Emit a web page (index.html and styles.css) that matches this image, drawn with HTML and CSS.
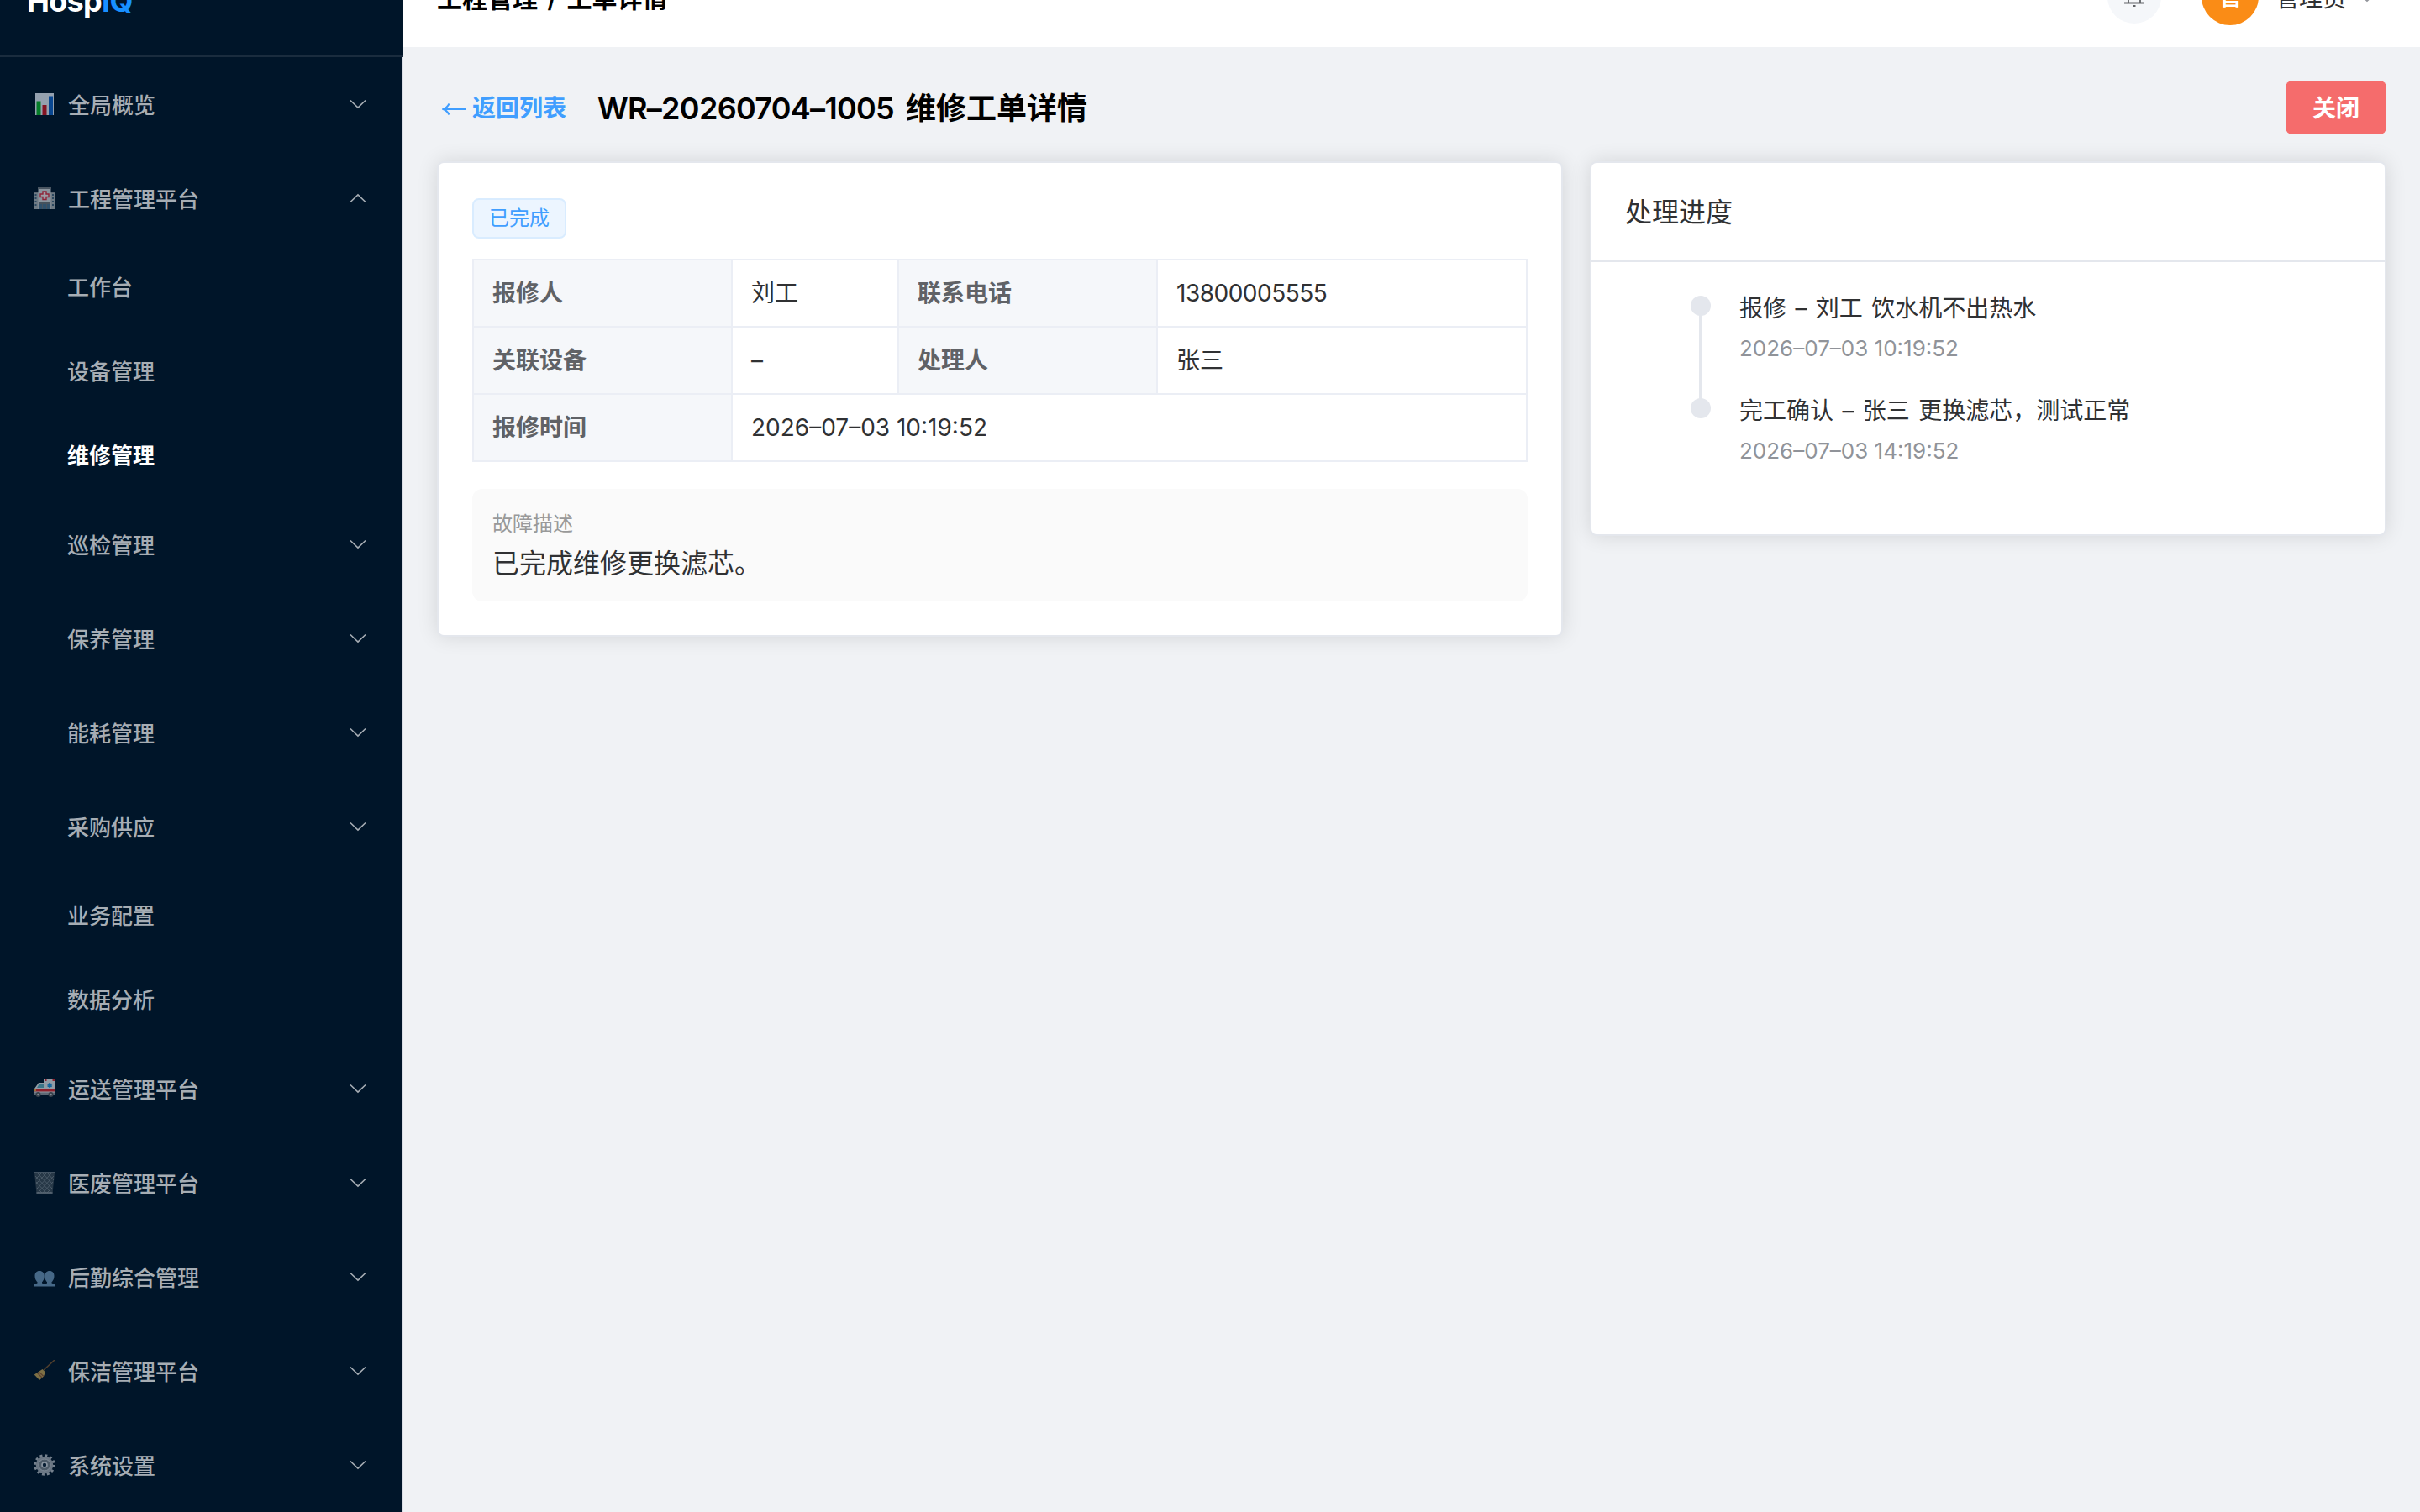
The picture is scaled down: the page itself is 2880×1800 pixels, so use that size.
FILE: index.html
```
<!DOCTYPE html>
<html lang="zh-CN">
<head>
    <meta charset="utf-8" />
    <title>HospIQ - 工单详情</title>
    <link rel="stylesheet" href="styles.css">
</head>
<body>
<svg class="defs">
    <symbol id="arrow" viewBox="0 0 24 24"><path d="M3 7.5l9 8.6 9-8.6" fill="none" stroke="currentColor" stroke-width="1.6"/></symbol>
</svg>
<div class="app">
    <aside class="sidebar">
        <div class="logo">Hosp<span>IQ</span></div>
        <ul class="menu">
            <li class="group">
                <svg class="emoji" viewBox="0 0 26 26">
                    <rect x="2" y="0" width="22" height="26" fill="#e3edf7"/>
                    <rect x="3.5" y="9.500" width="5" height="16.500" fill="#08b52a"/>
                    <rect x="10.500" y="14" width="5" height="12" fill="#c9131f"/>
                    <rect x="18" y="3.500" width="5" height="22.500" fill="#0f63c9"/>
                </svg>
                <span>全局概览</span><svg class="arrow"><use href="#arrow"/></svg>
            </li>
            <li class="group">
                <svg class="emoji" viewBox="0 0 26 26">
                    <path d="M0 5h26v21H0z" fill="#a9b0b6"/>
                    <path d="M0 5h6v1.500H0zM20 5h6v1.500h-6zM5 0h16v2H5z" fill="#717880"/>
                    <path d="M5.500 2h15v24h-15z" fill="#d5d8dc"/>
                    <path d="M1.500 8h2v2h-2zM1.500 12h2v2h-2zM1.500 16h2v2h-2zM1.500 20h2v2h-2zM22 8h2v2h-2zM22 12h2v2h-2zM22 16h2v2h-2zM22 20h2v2h-2z" fill="#41627c"/>
                    <path d="M7 18h12v8H7z" fill="#4b7190"/>
                    <path d="M7 18h12v2H7zM10 20h1v6h-1zM15 20h1v6h-1z" fill="#6c737a"/>
                    <path d="M11 5h4v3h3v3.500h-3v3h-4v-3H8V8h3z" fill="#f2e8ea" stroke="#dc2b3f" stroke-width="1.4"/>
                </svg>
                <span>工程管理平台</span><svg class="arrow up"><use href="#arrow"/></svg>
            </li>
            <li class="item">工作台</li>
            <li class="item">设备管理</li>
            <li class="item active">维修管理</li>
            <li class="group sub"><span>巡检管理</span><svg class="arrow"><use href="#arrow"/></svg></li>
            <li class="group sub"><span>保养管理</span><svg class="arrow"><use href="#arrow"/></svg></li>
            <li class="group sub"><span>能耗管理</span><svg class="arrow"><use href="#arrow"/></svg></li>
            <li class="group sub"><span>采购供应</span><svg class="arrow"><use href="#arrow"/></svg></li>
            <li class="item">业务配置</li>
            <li class="item">数据分析</li>
            <li class="group">
                <svg class="emoji" viewBox="0 0 26 26">
                    <path d="M12 2h14v18H1v-7l5-7h6z" fill="#dfe3e8"/>
                    <path d="M7 7h5v5H4z" fill="#5ba9bd"/>
                    <path d="M0 13.500h26v3H0z" fill="#d9262e"/>
                    <path d="M0 13h3v3H0z" fill="#f2a13a"/>
                    <path d="M13 2h2.500v2H13zM22.500 2H25v2h-2.500z" fill="#d9262e"/>
                    <path d="M19.200 6v6M16.600 7.500l5.200 3M21.800 7.500l-5.200 3" stroke="#1d91dd" stroke-width="2"/>
                    <path d="M0 17.500h26V20H0z" fill="#8f959c"/>
                    <circle cx="5.500" cy="20" r="3" fill="#55595f"/><circle cx="20.500" cy="20" r="3" fill="#55595f"/>
                    <circle cx="5.500" cy="20" r="1.300" fill="#c8ccd1"/><circle cx="20.500" cy="20" r="1.300" fill="#c8ccd1"/>
                </svg>
                <span>运送管理平台</span><svg class="arrow"><use href="#arrow"/></svg>
            </li>
            <li class="group">
                <svg class="emoji" viewBox="0 0 26 26">
                    <path d="M1 1h24l-2.500 25h-19z" fill="#3d4b58"/>
                    <path d="M2 5l19 20M5 2l18 19M11 2l12 13M17 2l7 8M3 12l12 13M4 19l6 6M24 5L5 25M21 2L3 21M15 2L3 14M9 2L2 9M23 12L11 25M22 19l-6 6" stroke="#7f8b96" stroke-width=".8"/>
                    <path d="M0 1h26M3.500 25h19" stroke="#8b959f" stroke-width="1.600"/>
                </svg>
                <span>医废管理平台</span><svg class="arrow"><use href="#arrow"/></svg>
            </li>
            <li class="group">
                <svg class="emoji" viewBox="0 0 26 26">
                    <path d="M7 6c-3.500 0-5.500 2.400-5.500 6 0 3 1 5.500 3 7.200v1.300L1 22v2.500h12V22l-3-1.500v-1.300c2-1.700 2.800-4.200 2.800-7.200 0-3.600-2.300-6-5.800-6z" fill="#6c95ba"/>
                    <path d="M19 6c3.500 0 5.500 2.400 5.500 6 0 3-1 5.500-3 7.200v1.300L25 22v2.500H13.500V22l2.500-1.500v-1.300c-2-1.700-2.600-4.200-2.600-7.200 0-3.600 2.100-6 5.600-6z" fill="#6c95ba"/>
                </svg>
                <span>后勤综合管理</span><svg class="arrow"><use href="#arrow"/></svg>
            </li>
            <li class="group">
                <svg class="emoji" viewBox="0 0 26 26">
                    <path d="M25 0L12 12" stroke="#7a5430" stroke-width="1.600"/>
                    <path d="M10.500 11l3.500 3.500-2 5L7 24 .8 17.500 6 14z" fill="#c0a255"/>
                    <path d="M6 14l6 5.500M4.500 15.500l5.500 5.500" stroke="#8f5a35" stroke-width="1.300"/>
                </svg>
                <span>保洁管理平台</span><svg class="arrow"><use href="#arrow"/></svg>
            </li>
            <li class="group">
                <svg class="emoji" viewBox="0 0 26 26">
                    <circle cx="13" cy="13" r="11.300" fill="none" stroke="#b4bcc4" stroke-width="3" stroke-dasharray="2.960 2.960"/>
                    <circle cx="13" cy="13" r="10.300" fill="#a3abb4"/>
                    <circle cx="13" cy="13" r="7" fill="#77818b" stroke="#c3cad1" stroke-width="1"/>
                    <circle cx="13" cy="13" r="3" fill="#0d2338" stroke="#d5dbe1" stroke-width="1.600"/>
                </svg>
                <span>系统设置</span><svg class="arrow"><use href="#arrow"/></svg>
            </li>
        </ul>
    </aside>

    <div class="main">
        <header class="topbar">
            <div class="crumb">工程管理 / 工单详情</div>
            <div class="bell">
                <svg viewBox="0 0 28 28"><path d="M7 21V12a7 7 0 0 1 14 0v9M2 21.500h24M14 2v3M12.500 25h3" fill="none" stroke="#606266" stroke-width="1.800"/></svg>
            </div>
            <div class="avatar">管</div>
            <div class="user">管理员</div>
            <svg class="user-arrow"><use href="#arrow"/></svg>
        </header>

        <div class="page-head">
            <a class="back"><svg viewBox="0 0 28 16"><path d="M28 8H2M8.500 1.500Q6 6.500 1.500 8q4.500 1.500 7 6.500" fill="none" stroke="currentColor" stroke-width="2"/></svg>返回列表</a>
            <h2><span class="no">WR–20260704–1005</span> 维修工单详情</h2>
            <button class="btn-close">关闭</button>
        </div>

        <div class="row">
            <section class="card detail">
                <span class="tag">已完成</span>
                <table class="desc">
                    <colgroup><col class="c-label"><col class="c-short"><col class="c-label"><col></colgroup>
                    <tr><th>报修人</th><td>刘工</td><th>联系电话</th><td class="phone">13800005555</td></tr>
                    <tr><th>关联设备</th><td>–</td><th>处理人</th><td>张三</td></tr>
                    <tr><th>报修时间</th><td colspan="3">2026–07–03 10:19:52</td></tr>
                </table>
                <div class="fault">
                    <div class="fault-label">故障描述</div>
                    <div class="fault-text">已完成维修更换滤芯。</div>
                </div>
            </section>

            <section class="card progress">
                <div class="card-head">处理进度</div>
                <ul class="timeline">
                    <li>
                        <div class="event">报修 – 刘工 饮水机不出热水</div>
                        <div class="time">2026–07–03 10:19:52</div>
                    </li>
                    <li>
                        <div class="event">完工确认 – 张三 更换滤芯，测试正常</div>
                        <div class="time">2026–07–03 14:19:52</div>
                    </li>
                </ul>
            </section>
        </div>
    </div>
</div>
</body>
</html>
```
FILE: styles.css
```
* {
    box-sizing: border-box;
}
body {
    margin: 0;
    height: 1800px;
    overflow: hidden;
    background: #f0f2f5;
    color: #303133;
    font-family: Inter, "Noto Sans CJK SC", sans-serif;
    font-size: 28px;
}
ul {
    list-style: none;
    margin: 0;
    padding: 0;
}
.defs {
    display: none;
}
/* page is scrolled down by 64px */
.app {
    display: flex;
    margin-top: -64px;
    height: 1864px;
}

/* sidebar */
.sidebar {
    width: 480px;
    flex: none;
}
.logo {
    height: 132px;
    padding: 0 0 2px 32px;
    background: #001529;
    border-bottom: 2px solid #1a2c3e;
    color: #fff;
    font-size: 36px;
    font-weight: 700;
    line-height: 130px;
    letter-spacing: -.7px;
}
.logo span {
    color: #1890ff;
}
.menu {
    background: #001529;
    border-right: 2px solid #dcdfe6;
    color: #a6adb4;
    font-size: 26px;
    font-weight: 500;
}
.group {
    display: flex;
    align-items: center;
    height: 112px;
    padding: 0 40px;
}
.group span {
    padding-bottom: 2px;
}
.group.sub {
    padding-left: 80px;
}
.item {
    height: 100px;
    padding-left: 80px;
    line-height: 102px;
}
.item.active {
    color: #fff;
    font-weight: 600;
}
.emoji {
    width: 26px;
    height: 26px;
    margin-right: 15px;
    opacity: .65;
}
.arrow {
    width: 24px;
    height: 24px;
    margin-left: auto;
}
.arrow.up {
    transform: scaleY(-1);
}

/* top bar */
.main {
    flex: 1;
}
.topbar {
    display: flex;
    align-items: center;
    height: 120px;
    padding: 0 53px 0 40px;
    background: #fff;
}
.crumb {
    color: #000;
    font-size: 30px;
    font-weight: 600;
    margin-right: auto;
    word-spacing: 4px;
}
.bell {
    display: flex;
    align-items: center;
    justify-content: center;
    width: 64px;
    height: 64px;
    border-radius: 50%;
    background: #f5f7fa;
}
.bell svg {
    width: 28px;
    height: 28px;
}
.avatar {
    width: 68px;
    height: 68px;
    margin: 0 20px 0 48px;
    border-radius: 50%;
    background: #fa8c16;
    color: #fff;
    font-weight: 600;
    line-height: 68px;
    text-align: center;
}
.user-arrow {
    width: 20px;
    height: 20px;
    margin: 4px 0 0 15px;
    color: #909399;
}

/* page title row */
.page-head {
    display: flex;
    align-items: center;
    height: 64px;
    margin: 40px 40px 32px;
}
.back {
    display: flex;
    align-items: center;
    padding-bottom: 2px;
    color: #409eff;
    font-weight: 600;
}
.back svg {
    width: 28px;
    height: 16px;
    margin: 6px 8px 0 6px;
}
h2 {
    margin: 0 auto 0 37px;
    padding-bottom: 4px;
    color: #000;
    font-size: 36px;
    font-weight: 600;
}
.no {
    margin-right: 5px;
    letter-spacing: -.7px;
}
.btn-close {
    width: 120px;
    height: 64px;
    padding: 0 0 2px;
    border: 0;
    border-radius: 8px;
    background: #f56c6c;
    color: #fff;
    font: inherit;
    font-weight: 600;
}

/* cards */
.row {
    display: grid;
    grid-template-columns: 1340px 948px;
    gap: 32px;
    align-items: start;
    padding: 0 40px;
}
.card {
    background: #fff;
    border: 2px solid #e4e7ed;
    border-radius: 8px;
    box-shadow: 0 0 24px rgba(0, 0, 0, .12);
}
.detail {
    height: 566px;
    padding: 40px;
}
.tag {
    display: block;
    width: 112px;
    height: 48px;
    margin: 2px 0 24px;
    border: 2px solid #d9ecff;
    border-radius: 8px;
    background: #ecf5ff;
    color: #409eff;
    font-size: 24px;
    line-height: 43px;
    text-align: center;
}
.desc {
    width: 1256px;
    table-layout: fixed;
    border-collapse: collapse;
}
.c-label {
    width: 308px;
}
.c-short {
    width: 198px;
}
.desc th, .desc td {
    height: 80px;
    padding: 0 22px;
    border: 2px solid #ebeef5;
    text-align: left;
    line-height: 46px;
}
.desc th {
    background: #f5f7fa;
    color: #606266;
    font-weight: 700;
}
.phone {
    letter-spacing: -.5px;
}
.fault {
    height: 134px;
    margin-top: 32px;
    padding: 25px 24px;
    border-radius: 12px;
    background: #fafafa;
}
.fault-label {
    color: #999;
    font-size: 24px;
    line-height: 34px;
}
.fault-text {
    margin-top: 7px;
    font-size: 32px;
    line-height: 46px;
}

.progress {
    height: 446px;
}
.card-head {
    height: 118px;
    padding: 1px 0 0 40px;
    border-bottom: 2px solid #e4e7ed;
    font-size: 32px;
    line-height: 116px;
}
.timeline {
    padding: 40px 40px 0 118px;
}
.timeline li {
    position: relative;
    height: 122px;
    padding: 1px 0 0 58px;
}
.timeline li::before {
    content: "";
    position: absolute;
    left: 0;
    top: 0;
    width: 24px;
    height: 24px;
    border-radius: 50%;
    background: #e4e7ed;
}
.timeline li:first-child::after {
    content: "";
    position: absolute;
    left: 10px;
    top: 12px;
    width: 4px;
    height: 122px;
    background: #e4e7ed;
}
.event {
    line-height: 28px;
    word-spacing: 2.5px;
}
.time {
    margin-top: 20px;
    color: #909399;
    font-size: 26px;
    line-height: 28px;
}
```
